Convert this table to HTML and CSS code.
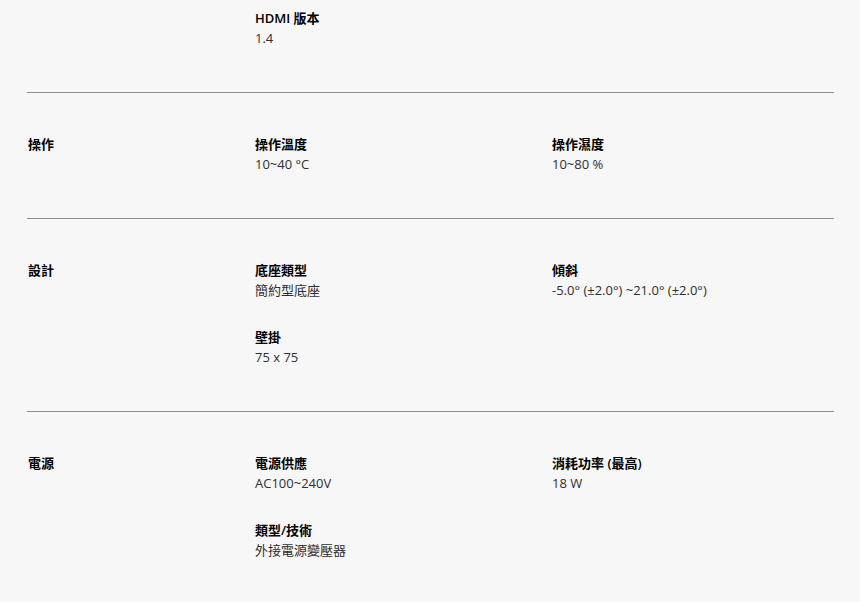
FILE: index.html
```html
<!DOCTYPE html>
<html lang="zh-Hant">
<head>
<meta charset="utf-8">
<link rel="stylesheet" href="styles.css">
</head>
<body>
<div class="specs">
  <section class="spec spec--partial">
    <h3 class="spec__title"></h3>
    <div class="spec__items">
      <div class="item"><div class="item__label">HDMI 版本</div><div class="item__value">1.4</div></div>
    </div>
  </section>
  <section class="spec">
    <h3 class="spec__title">操作</h3>
    <div class="spec__items">
      <div class="item"><div class="item__label">操作溫度</div><div class="item__value">10~40 °C</div></div>
      <div class="item"><div class="item__label">操作濕度</div><div class="item__value">10~80 %</div></div>
    </div>
  </section>
  <section class="spec">
    <h3 class="spec__title">設計</h3>
    <div class="spec__items">
      <div class="item"><div class="item__label">底座類型</div><div class="item__value">簡約型底座</div></div>
      <div class="item"><div class="item__label">傾斜</div><div class="item__value">-5.0° (±2.0°) ~21.0° (±2.0°)</div></div>
      <div class="item"><div class="item__label">壁掛</div><div class="item__value">75 x 75</div></div>
    </div>
  </section>
  <section class="spec">
    <h3 class="spec__title">電源</h3>
    <div class="spec__items">
      <div class="item"><div class="item__label">電源供應</div><div class="item__value">AC100~240V</div></div>
      <div class="item"><div class="item__label">消耗功率 (最高)</div><div class="item__value">18 W</div></div>
      <div class="item"><div class="item__label">類型/技術</div><div class="item__value">外接電源變壓器</div></div>
    </div>
  </section>
</div>
</body>
</html>
```
FILE: styles.css
```css
html, body {
  margin: 0;
  padding: 0;
  background: #f7f7f7;
}
body {
  font-family: "Open Sans", "Noto Sans CJK TC", sans-serif;
  font-size: 13px;
  line-height: 20px;
  color: #000;
}
.specs {
  padding: 0 26px 0 27px;
}
.spec {
  display: grid;
  grid-template-columns: 227px 1fr;
  padding: 41px 0 44px 1px;
  border-top: 1px solid #8c8c8c;
}
.spec--partial {
  border-top: none;
  padding-top: 8px;
  padding-bottom: 44px;
}
.spec__title {
  margin: 0;
  font-size: 13px;
  font-weight: 600;
  line-height: 20px;
}
.spec__items {
  display: grid;
  grid-template-columns: 297px 1fr;
  row-gap: 27px;
}
.item__label {
  font-weight: 600;
  color: #000;
}
.item__value {
  color: #2e2e2e;
}
```
